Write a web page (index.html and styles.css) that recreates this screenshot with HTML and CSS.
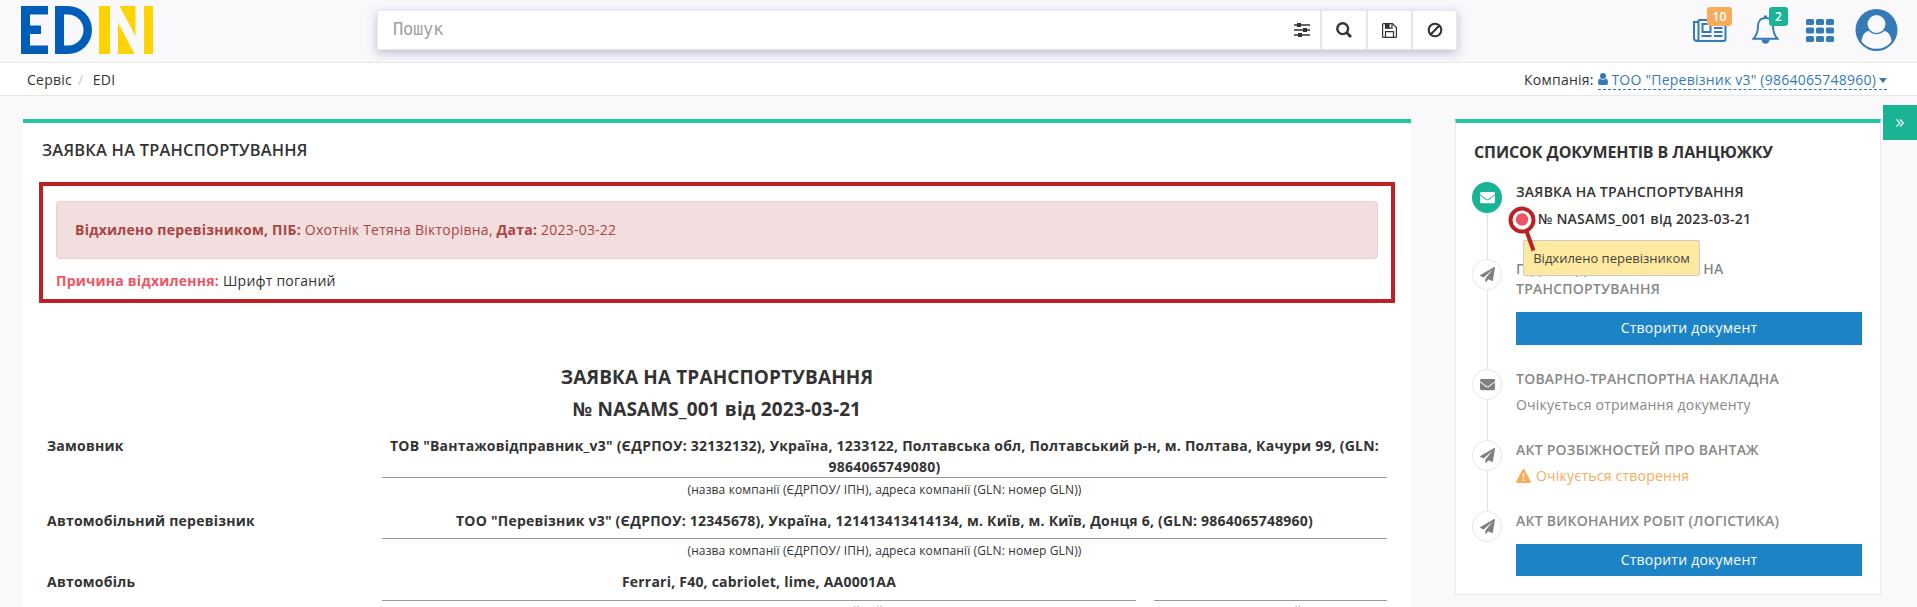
FILE: index.html
```html
<!DOCTYPE html>
<html lang="uk">
<head>
<meta charset="utf-8">
<title>EDIN</title>
<link rel="stylesheet" href="styles.css">
</head>
<body>
<svg width="0" height="0" class="defs">
  <symbol id="plane" viewBox="0 0 1792 1792"><path d="M1764 11q33 24 27 64l-256 1536q-5 29-32 45-14 8-31 8-11 0-24-5l-453-185-242 295q-18 23-49 23-13 0-22-4-19-7-30.500-23.500t-11.500-36.500v-349l864-1059-1069 925-395-162q-37-14-40-55-2-40 32-59l1664-960q15-9 32-9 20 0 36 11z"/></symbol>
  <symbol id="mail" viewBox="0 0 512 512"><path d="M502.300 190.800c3.900-3.100 9.700-.2 9.700 4.700V400c0 26.500-21.500 48-48 48H48c-26.500 0-48-21.500-48-48V195.600c0-5 5.700-7.800 9.700-4.700 22.400 17.400 52.100 39.500 154.100 113.600 21.100 15.400 56.700 47.800 92.200 47.600 35.700.3 72-32.800 92.300-47.600 102-74.100 131.600-96.300 154-113.700zM256 320c23.200.4 56.600-29.200 73.400-41.400 132.700-96.300 142.800-104.700 173.400-128.700 5.800-4.500 9.200-11.500 9.200-18.900v-19c0-26.500-21.500-48-48-48H48c-26.500 0-48 21.500-48 48v19c0 7.400 3.400 14.300 9.200 18.900 30.600 23.900 40.700 32.400 173.400 128.700 16.800 12.200 50.200 41.800 73.400 41.400z"/></symbol>
</svg>

<header class="header">
  <svg class="logo" width="134" height="48" viewBox="0 0 134 48">
    <path class="logo-blue" d="M0 0H27V8.500H9V19.500H20V28H9V39.500H27V48H0Z"/>
    <path class="logo-blue" fill-rule="evenodd" d="M34 0H47A24 24 0 0 1 47 48H34ZM43 8.500V39.500H47A15.500 15.500 0 0 0 47 8.500Z"/>
    <path class="logo-yellow" d="M78 0H89V48H78ZM123 0H132V48H123ZM98.500 0H114.500V30ZM97 16.500V48H113.500Z"/>
  </svg>
  <div class="search">
    <span class="search-text">Пошук</span>
    <span class="search-btn tune"><svg width="16" height="14" viewBox="0 0 16 14"><path stroke="#333" stroke-width="1.400" d="M0 2H16M0 7H16M0 12H16"/><path fill="#333" d="M3 0h4v4H3zM9 5h4v4H9zM4 10h4v4H4z"/></svg></span>
    <span class="search-btn"><svg width="16" height="16" viewBox="0 0 16 16" fill="none" stroke="#333" stroke-width="2.400"><circle cx="6.700" cy="6.700" r="5.400"/><path d="M10.600 10.600L15 15" stroke-width="2.800"/></svg></span>
    <span class="search-btn save"><svg width="15" height="15" viewBox="0 0 15 15" fill="none" stroke="#333" stroke-width="1.200"><path d="M.6 1.500Q.6.600 1.500.600H10.500L14.400 4.500V13.500Q14.400 14.400 13.500 14.400H1.500Q.6 14.400.6 13.500Z"/><path d="M3.500.6V5.200H10V.6M3.500 14.400V8.600H11.500V14.400"/><path d="M4 1h3v4H4z" fill="#333"/></svg></span>
    <span class="search-btn last"><svg width="16" height="16" viewBox="0 0 16 16" fill="none" stroke="#333" stroke-width="2.100"><circle cx="8" cy="8" r="6.300"/><path d="M3.600 12.400L12.400 3.600"/></svg></span>
  </div>
  <div class="tools">
    <span class="tool news">
      <svg width="34" height="24" viewBox="0 0 34 24" fill="none" stroke="#337ab7" stroke-width="2"><path d="M5.500 1H31Q32.500 1 32.500 2.500V20Q32.500 22 30.500 22H4Q1 22 1 19V3H5.500M5.500 1V19Q5.500 22 3.500 22"/><rect x="9.500" y="5" width="8" height="8"/><path d="M8.500 17H18.500M21 5H29.500M21 9H29.500M21 13H29.500M21 17H29.500"/></svg>
      <b class="badge orange">10</b>
    </span>
    <span class="tool bell">
      <svg width="27" height="30" viewBox="0 0 27 30" fill="none" stroke="#337ab7" stroke-width="1.900"><path d="M13.500 3C8 3 6 7 6 11C6 18 4 21 1.300 23.800H25.700C23 21 21 18 21 11C21 7 19 3 13.500 3Z"/><path d="M12 0.500h3v2.500h-3z" fill="#337ab7" stroke="none"/><path d="M9.500 24.500A4 4.300 0 0 0 17.500 24.500Z" fill="#337ab7" stroke="none"/></svg>
      <b class="badge green">2</b>
    </span>
    <svg class="grid-icon" width="28" height="23" viewBox="0 0 28 23" fill="#337ab7"><rect width="8" height="6" rx="1.500"/><rect x="10" width="8" height="6" rx="1.500"/><rect x="20" width="8" height="6" rx="1.500"/><rect y="8.500" width="8" height="6" rx="1.500"/><rect x="10" y="8.500" width="8" height="6" rx="1.500"/><rect x="20" y="8.500" width="8" height="6" rx="1.500"/><rect y="17" width="8" height="6" rx="1.500"/><rect x="10" y="17" width="8" height="6" rx="1.500"/><rect x="20" y="17" width="8" height="6" rx="1.500"/></svg>
    <svg class="avatar" width="43" height="42" viewBox="0 0 42 42"><circle cx="21" cy="21" r="21" fill="#337ab7"/><path fill="#f9f9fc" d="M6 32.500C6.500 26.500 9 22.500 13.500 22A10.500 10.500 0 0 0 28.500 22C33 22.500 35.500 26.500 36 32.500A19 19 0 0 1 6 32.500Z"/><circle cx="21" cy="15" r="9" fill="#f9f9fc"/></svg>
  </div>
</header>

<nav class="crumbs">
  <div><span>Сервіс</span><span class="slash">/</span><span>EDI</span></div>
  <div class="company">Компанія: <span class="company-link"><svg width="10" height="12" viewBox="0 0 10 12" fill="#337ab7"><circle cx="5" cy="3" r="3"/><path d="M2 5.500Q5 8 8 5.500Q10 6 10 9.500Q10 12 8.300 12H1.700Q0 12 0 9.500Q0 6 2 5.500Z"/></svg> ТОО "Перевізник v3" (9864065748960) <i class="caret"></i></span></div>
</nav>

<main class="page">
  <section class="card doc">
    <h5 class="doc-head">ЗАЯВКА НА ТРАНСПОРТУВАННЯ</h5>
    <div class="marked">
      <div class="alert"><b>Відхилено перевізником, ПІБ:</b> Охотнік Тетяна Вікторівна, <b>Дата:</b> 2023-03-22</div>
      <div class="reason"><b>Причина відхилення:</b> Шрифт поганий</div>
    </div>
    <h2 class="title">ЗАЯВКА НА ТРАНСПОРТУВАННЯ<br>№ NASAMS_001 від 2023-03-21</h2>
    <div class="row">
      <div class="label">Замовник</div>
      <div class="field"><div class="value two">ТОВ "Вантажовідправник_v3" (ЄДРПОУ: 32132132), Україна, 1233122, Полтавська обл, Полтавський р-н, м. Полтава, Качури 99, (GLN: 9864065749080)</div><div class="hint">(назва компанії (ЄДРПОУ/ ІПН), адреса компанії (GLN: номер GLN))</div></div>
    </div>
    <div class="row">
      <div class="label">Автомобільний перевізник</div>
      <div class="field"><div class="value">ТОО "Перевізник v3" (ЄДРПОУ: 12345678), Україна, 121413413414134, м. Київ, м. Київ, Донця 6, (GLN: 9864065748960)</div><div class="hint">(назва компанії (ЄДРПОУ/ ІПН), адреса компанії (GLN: номер GLN))</div></div>
    </div>
    <div class="row">
      <div class="label">Автомобіль</div>
      <div class="field split">
        <div><div class="value car">Ferrari, F40, cabriolet, lime, AA0001AA</div><div class="hint low">(марка, модель, тип кузова, колір, реєстраційний номер)</div></div>
        <div><div class="value car"></div><div class="hint low">(загальний)</div></div>
      </div>
    </div>
  </section>

  <aside class="card chain">
    <h5 class="chain-head">СПИСОК ДОКУМЕНТІВ В ЛАНЦЮЖКУ</h5>
    <div class="step s1">
      <span class="dot active"><svg width="15" height="15"><use href="#mail"/></svg></span>
      <div class="step-title dark">ЗАЯВКА НА ТРАНСПОРТУВАННЯ</div>
      <div class="step-title dark number">№ NASAMS_001 від 2023-03-21</div>
      <svg class="pin" width="32" height="48" viewBox="0 0 32 48"><circle cx="14" cy="14" r="11.500" fill="#fff" stroke="#bd2025" stroke-width="4"/><circle cx="14" cy="13.500" r="6.200" fill="#ed5565"/></svg>
      <div class="tip">Відхилено перевізником</div>
      <svg class="pin" width="32" height="48" viewBox="0 0 32 48"><path d="M18.500 25L25.500 44.500" stroke="#bd2025" stroke-width="4"/></svg>
    </div>
    <div class="step s2">
      <span class="dot"><svg width="15" height="15"><use href="#plane"/></svg></span>
      <div class="step-title">ПІДТВЕРДЖЕННЯ ЗАЯВКИ НА ТРАНСПОРТУВАННЯ</div>
      <div class="btn">Створити документ</div>
    </div>
    <div class="step s3">
      <span class="dot"><svg width="15" height="15"><use href="#mail"/></svg></span>
      <div class="step-title">ТОВАРНО-ТРАНСПОРТНА НАКЛАДНА</div>
      <div class="note">Очікується отримання документу</div>
    </div>
    <div class="step s4">
      <span class="dot"><svg width="15" height="15"><use href="#plane"/></svg></span>
      <div class="step-title">АКТ РОЗБІЖНОСТЕЙ ПРО ВАНТАЖ</div>
      <div class="note warn"><svg width="15" height="14" viewBox="0 0 15 14"><path fill="#f8ac59" d="M6.500.6Q7.500-.5 8.500.6L14.800 12.500Q15.200 14 13.500 14H1.500Q-.2 14 .2 12.500Z"/><path fill="#fff" d="M6.500 4.500h2l-.3 4.500H6.800zM6.600 10.200h1.800V12H6.600z"/></svg>Очікується створення</div>
    </div>
    <div class="step s5">
      <span class="dot"><svg width="15" height="15"><use href="#plane"/></svg></span>
      <div class="step-title">АКТ ВИКОНАНИХ РОБІТ (ЛОГІСТИКА)</div>
      <div class="btn">Створити документ</div>
    </div>
  </aside>
  <span class="toggle"><svg width="8" height="8" viewBox="0 0 8 8" fill="none" stroke="#fff" stroke-width="1.200"><path d="M.5.500L4 4L.5 7.500M4 .5L7.500 4L4 7.500"/></svg></span>
</main>
</body>
</html>
```

FILE: styles.css
```css
* { box-sizing: border-box; }
html, body { height: 607px; overflow: hidden; }
body { margin: 0; background: #f9f9fc; color: #333; font: 14px/20px "Open Sans", sans-serif; letter-spacing: .23px; }
h2, h5 { margin: 0; }
.defs { position: absolute; }
.header { height: 63px; border-bottom: 1px solid #e7e8ea; display: flex; align-items: flex-start; padding-left: 21px; }
.logo { margin-top: 6px; }
.logo-blue { fill: #005eb8; }
.logo-yellow { fill: #ffd300; }
.search { display: flex; width: 1080px; height: 40px; margin: 10px 0 0 222px; background: #fff; border: 1px solid #e7e9ee; box-shadow: 0 3px 10px rgba(70, 75, 130, .35); }
.search-text { flex: 1; padding-left: 15px; font: 17px/37px "DejaVu Sans Mono", monospace; letter-spacing: -.2px; color: #a0a0a0; }
.search-btn { width: 46px; border-right: 2px solid #e5e5e8; display: flex; align-items: center; justify-content: center; }
.search-btn.tune { width: 44px; padding-left: 5px; }
.search-btn.save { width: 45px; }
.search-btn.last { width: 43px; border: 0; }
.tools { display: flex; margin-left: auto; padding-right: 19px; }
.tool { position: relative; display: block; }
.tool svg { display: block; }
.news { margin-top: 19px; width: 34px; }
.bell { margin: 15px 0 0 25px; width: 27px; }
.badge { position: absolute; height: 19px; border-radius: 3px; color: #fff; font: 600 12px/19px "Open Sans", sans-serif; text-align: center; }
.orange { background: #f8ac59; width: 25px; left: 14px; top: -12px; }
.green { background: #1ab394; width: 19px; left: 17px; top: -8px; }
.grid-icon { margin: 19px 0 0 27px; }
.avatar { margin: 9px 0 0 21px; }
.crumbs { height: 33px; background: #fff; border-bottom: 1px solid #e7e8ea; display: flex; justify-content: space-between; padding: 7px 30px 0 27px; }
.slash { color: #ccc; padding: 0 9.5px 0 6px; }
.company-link { display: inline-block; height: 20px; color: #337ab7; border-bottom: 1px dashed #337ab7; }
.caret { display: inline-block; border: 4.5px solid transparent; border-top: 5px solid #337ab7; border-bottom: 0; vertical-align: 2px; margin-left: -1px; }
.page { display: flex; align-items: flex-start; position: relative; height: 511px; overflow: hidden; }
.card { background: #fff; border-top: 4px solid #23c6a1; margin-top: 23px; }
.doc { width: 1388px; height: 488px; margin-left: 23px; overflow: hidden; }
.doc-head { font-size: 16.4px; font-weight: 600; line-height: 20px; padding: 17px 0 0 19px; }
.marked { margin: 22px 16px 0; height: 121px; border: 4px solid #bd2025; padding: 15px 13px 0; }
.alert { height: 58px; background: #f2dede; border: 1px solid #ebccd1; border-radius: 4px; color: #a94442; padding: 18px; }
.reason { padding-top: 12px; }
.reason b { color: #ed5565; }
.title { font-size: 19px; line-height: 32px; letter-spacing: .13px; text-align: center; padding: 58px 0 1px; }
.row { display: grid; grid-template-columns: 335px 1005px; padding-left: 24px; font-weight: 700; }
.value { border-bottom: 1px solid #999; text-align: center; line-height: 21px; letter-spacing: .22px; height: 38px; padding-top: 9px; }
.value.two { height: 52px; }
.value.car { height: 39px; }
.hint { font-size: 12px; line-height: 17px; letter-spacing: .13px; font-weight: 400; text-align: center; padding-top: 3px; height: 23px; }
.hint.low { padding-top: 2px; }
.label { padding-top: 9px; line-height: 21px; }
.split { display: grid; grid-template-columns: 754px 233px; gap: 18px; }
.chain { width: 426px; height: 476px; margin-left: 44px; border-left: 1px solid #e7eaec; border-right: 1px solid #e7eaec; border-bottom: 1px solid #e7eaec; padding-left: 60px; }
.chain-head { font-size: 16px; line-height: 20px; letter-spacing: -.09px; margin: 19px 0 20px -42px; }
.step { position: relative; width: 346px; }
.step::before { content: ""; position: absolute; left: -29px; top: 31px; bottom: 0; width: 1px; background: #e0e2e4; }
.s1 { height: 77px; }
.s2 { height: 110px; }
.s3, .s4 { height: 71px; }
.s5::before { display: none; }
.dot { position: absolute; left: -44px; top: 0; width: 30px; height: 31px; border: 1px solid #e7eaec; border-radius: 50%; background: #fff; display: flex; align-items: center; justify-content: center; }
.dot svg { fill: #808080; }
.dot.active { background: #1ab394; border-color: #1ab394; }
.dot.active svg { fill: #fff; }
.step-title { font-weight: 600; line-height: 20px; color: #888; }
.dark { color: #333; }
.number { padding: 7px 0 0 22px; }
.tip { position: absolute; left: 7px; top: 58px; width: 177px; height: 36px; background: #fde9a0; border: 1px solid #ccc; border-radius: 2px; font-size: 13px; letter-spacing: 0; line-height: 34px; text-align: center; z-index: 2; color: #444; }
.pin { position: absolute; left: -8.500px; top: 23.500px; z-index: 3; }
.btn { background: #1c84c6; color: #fff; text-align: center; height: 33px; line-height: 32px; margin-top: 13px; }
.s5 .btn { height: 32px; }
.note { color: #888; padding-top: 6px; }
.warn { color: #f8ac59; display: flex; gap: 5px; align-items: center; }
.toggle { position: absolute; right: 0; top: 9px; width: 34px; height: 35px; background: #1ab394; display: flex; align-items: center; justify-content: center; }
```
